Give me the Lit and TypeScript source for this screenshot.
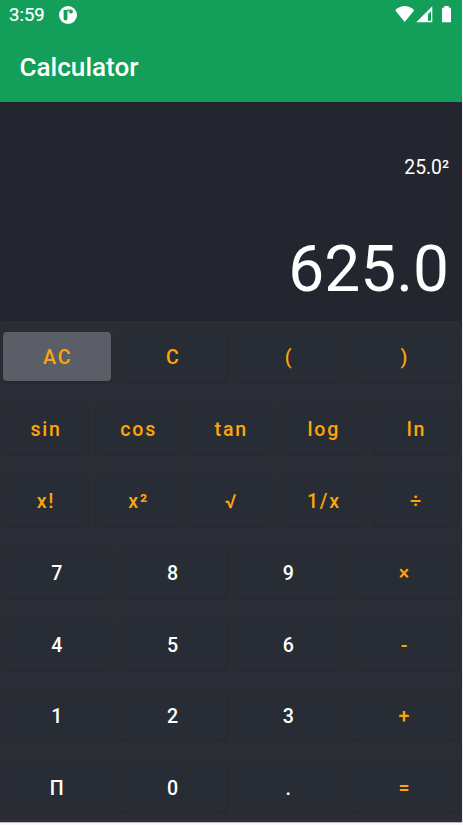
import { LitElement, html, css } from "lit";
import { customElement, property } from "lit/decorators.js";
import { classMap } from "lit/directives/class-map.js";

@customElement("status-bar")
class StatusBar extends LitElement {
  static styles = css`
    :host { display: flex; height: 30px; align-items: center; box-sizing: border-box; padding: 0 8px 0 9px; color: #fff; }
    .time { font-size: 18.5px; line-height: 30px; width: 50px; font-weight: 400; -webkit-text-stroke: 0.2px #fff; }
    .badge { width: 18px; height: 18px; }
    .gap { flex: 1; }
    .signals { width: 60px; height: 30px; }
    svg { display: block; }
  `;
  render() {
    return html`
      <span class="time">3:59</span>
      <svg class="badge" viewBox="0 0 18 18">
        <circle cx="9" cy="9" r="9" fill="#fff" />
        <path d="M4.6 4H8.4V12.6A1.9 1.9 0 0 1 4.6 12.6Z" fill="#139f5a" />
        <circle cx="12" cy="5.7" r="1.9" fill="#139f5a" />
        <path d="M8.2 3.6H12V4.5H9.4V5.6H8.2Z" fill="#139f5a" />
      </svg>
      <span class="gap"></span>
      <svg class="signals" viewBox="0 0 60 30" fill="#fff">
        <path d="M1.2 10.2Q10.7 1.8 20.2 10.2L10.7 22Z" />
        <path fill-rule="evenodd" d="M22.2 22.3L38.3 6.2V22.3ZM34 20.7H37V11.2L34 14.2Z" />
        <path d="M50.2 6H54.8V7.8H57V22.2H48V7.8H50.2Z" />
      </svg>
    `;
  }
}

@customElement("calc-key")
class CalcKey extends LitElement {
  @property() label = "";
  @property({ type: Boolean }) digit = false;
  @property({ type: Boolean }) pressed = false;
  static styles = css`
    :host { display: flex; flex: 1 1 0; min-width: 0; }
    .key {
      flex: 1; height: 49px; padding: 3px 0 0 1px; border: 0; border-radius: 4px;
      background: #282c34; color: #ffa50a; font: 500 19.6px/46px Roboto, sans-serif;
      letter-spacing: 1.75px; text-align: center;
      box-shadow: 0 1px 3px rgba(0, 0, 0, 0.16);
    }
    .digit { color: #fff; }
    .pressed { background: #5b5e66; }
  `;
  render() {
    return html`<button class=${classMap({ key: true, digit: this.digit, pressed: this.pressed })}>${this.label}</button>`;
  }
}

const ROWS = [
  ["AC", "C", "(", ")"],
  ["sin", "cos", "tan", "log", "ln"],
  ["x!", "x²", "√", "1/x", "÷"],
  ["7", "8", "9", "×"],
  ["4", "5", "6", "-"],
  ["1", "2", "3", "+"],
  ["П", "0", ".", "="],
];

@customElement("app-root")
class AppRoot extends LitElement {
  static styles = css`
    :host { display: block; width: 463px; height: 825px; background: #fafafa; overflow: hidden; font-family: Roboto, sans-serif; }
    .screen { width: 462px; height: 822px; display: flex; flex-direction: column; background: #23262e; border-bottom: 1px solid #c4c5c7; }
    header { height: 102px; background: #139f5a; color: #fff; flex: none; }
    h1 { margin: 0; padding-left: 19.5px; height: 72px; line-height: 74px; font-size: 26.1px; font-weight: 500; }
    .display { height: 219px; flex: none; display: flex; flex-direction: column; align-items: flex-end; box-sizing: border-box; color: #fff; }
    .expression { margin: 53px 13px 0 0; font-size: 19.3px; line-height: 26px; }
    .result { margin: 49px 13px 0 0; font-size: 64px; line-height: 80px; }
    .pad {
      flex: 1; box-sizing: border-box; border-radius: 3px 3px 0 0; background: #2a2d35;
      padding: 11.4px 3.5px 0 3px; display: flex; flex-direction: column; gap: 22.8px;
      box-shadow: 0 0 2px rgba(0, 0, 0, 0.2);
    }
    .row { display: flex; gap: 7.5px; }
  `;
  render() {
    return html`
      <div class="screen">
        <header><status-bar></status-bar><h1>Calculator</h1></header>
        <section class="display">
          <div class="expression">25.0²</div>
          <div class="result">625.0</div>
        </section>
        <main class="pad">
          ${ROWS.map(
            (row) => html`<div class="row">
              ${row.map((label) => html`<calc-key .label=${label} .digit=${/[0-9.П]$/.test(label)} .pressed=${label === "AC"}></calc-key>`)}
            </div>`
          )}
        </main>
      </div>
    `;
  }
}
